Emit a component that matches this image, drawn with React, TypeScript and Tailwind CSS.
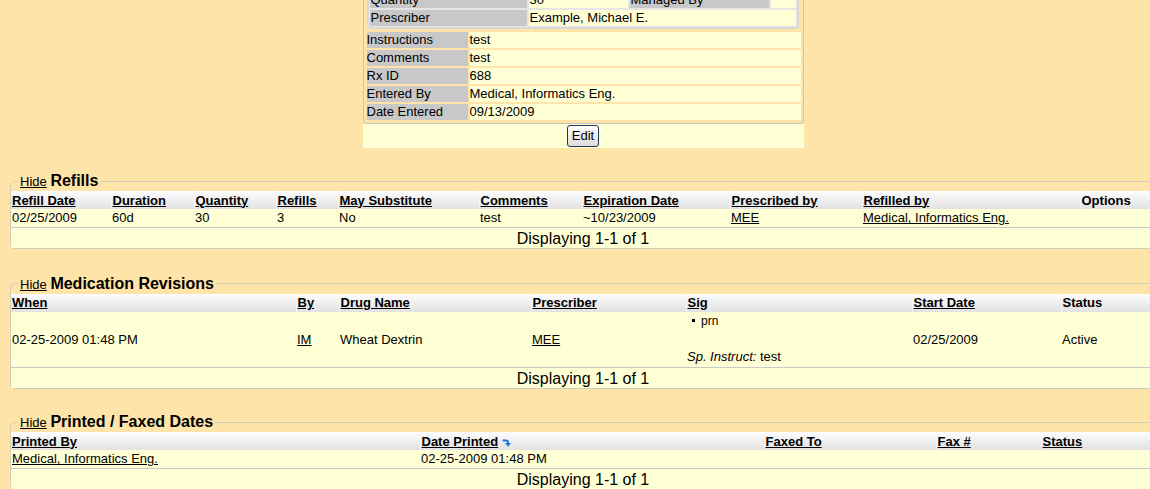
import React from "react";

const Y = "bg-[#ffffd6]";
const G = "bg-[#c8c8c8]";

function InfoRow({ label, value }: { label: string; value: string }) {
  return (
    <div className="grid grid-cols-[101px_1fr] gap-[2px] h-[16px] leading-[16px]">
      <div className={G}>{label}</div>
      <div className={Y}>{value}</div>
    </div>
  );
}

function TopBox() {
  return (
    <div className="mx-auto w-[441px]">
      <div className="border border-[#c4c4c4] rounded-[4px] pl-[3px] pr-[2px] pt-[2px] pb-[3px]">
        <div className="mr-[2px] border-2 border-[#d9d9d9] rounded-[4px] bg-[#e6e6e6] p-[1px] grid grid-cols-[157px_99px_139px_1fr] gap-[2px] leading-[16px]">
          <div className={`${G} h-[16px] pl-[1px]`}>Quantity</div>
          <div className={`${Y} pl-[1px]`}>30</div>
          <div className={`${G} pl-[1px]`}>Managed By</div>
          <div className={Y}></div>
          <div className={`${G} h-[16px] pl-[1px]`}>Prescriber</div>
          <div className={`${Y} col-span-3 pl-[1px]`}>Example, Michael E.</div>
        </div>
        <div className="mt-[3px] flex flex-col gap-[2px]">
          <InfoRow label="Instructions" value="test" />
          <InfoRow label="Comments" value="test" />
          <InfoRow label="Rx ID" value="688" />
          <InfoRow label="Entered By" value="Medical, Informatics Eng." />
          <InfoRow label="Date Entered" value="09/13/2009" />
        </div>
      </div>
      <div className={`${Y} h-[24px] flex justify-center pt-[1px]`}>
        <button className="h-[22px] w-[32px] border border-[#203a58] rounded-[3px] bg-linear-to-b from-[#ffffff] to-[#dcdcdc] text-[13px] leading-[20px] text-black">
          Edit
        </button>
      </div>
    </div>
  );
}

function Legend({ title }: { title: string }) {
  return (
    <legend className="ml-[7px] px-[2px] leading-[19px] whitespace-nowrap">
      <a className="underline text-[13px]">Hide</a>{" "}
      <span className="text-[16px] font-bold">{title}</span>
    </legend>
  );
}

const TH =
  "h-[18px] p-0 pl-[1px] text-left font-bold align-middle bg-linear-to-b from-[#fdfdfd] to-[#e1e1e1] whitespace-nowrap";
const THB = `${TH} border-l border-[#f6f6f6]`;

function SortIcon() {
  return (
    <svg width="9" height="9" viewBox="0 0 9 9" className="inline-block ml-[4px] -mb-[1px]">
      <path d="M0.5 2.5 H4 Q6 2.5 6 4.5 V5.5" stroke="#2277dd" strokeWidth="2" fill="none" />
      <path d="M3 5 H9 L6 8.8 Z" fill="#2277dd" />
    </svg>
  );
}

function Footer({ span }: { span: number }) {
  return (
    <tr className={Y}>
      <td colSpan={span} className="h-[20px] p-0 pt-[1px] text-center text-[16px] leading-[19px]">
        Displaying 1-1 of 1
      </td>
    </tr>
  );
}

function Refills() {
  return (
    <fieldset className="mx-[10px] mt-[23px] border border-[#d2cdbd] rounded-[5px]">
      <Legend title="Refills" />
      <table className="w-full table-fixed border-collapse">
        <colgroup>
          <col className="w-[100px]" />
          <col className="w-[83px]" />
          <col className="w-[82px]" />
          <col className="w-[62px]" />
          <col className="w-[141px]" />
          <col className="w-[103px]" />
          <col className="w-[148px]" />
          <col className="w-[132px]" />
          <col className="w-[218px]" />
          <col className="w-[75px]" />
        </colgroup>
        <thead>
          <tr>
            <th className={TH}><a className="underline">Refill Date</a></th>
            <th className={THB}><a className="underline">Duration</a></th>
            <th className={THB}><a className="underline">Quantity</a></th>
            <th className={THB}><a className="underline">Refills</a></th>
            <th className={THB}><a className="underline">May Substitute</a></th>
            <th className={THB}><a className="underline">Comments</a></th>
            <th className={THB}><a className="underline">Expiration Date</a></th>
            <th className={THB}><a className="underline">Prescribed by</a></th>
            <th className={THB}><a className="underline">Refilled by</a></th>
            <th className={THB}>Options</th>
          </tr>
        </thead>
        <tbody>
          <tr className={`${Y} border-b border-[#c8c8c8]`}>
            <td className="h-[18px] p-0 pl-[1px]">02/25/2009</td>
            <td className="p-0 pl-[1px]">60d</td>
            <td className="p-0 pl-[1px]">30</td>
            <td className="p-0 pl-[1px]">3</td>
            <td className="p-0 pl-[1px]">No</td>
            <td className="p-0 pl-[1px]">test</td>
            <td className="p-0 pl-[1px]">~10/23/2009</td>
            <td className="p-0 pl-[1px]"><a className="underline">MEE</a></td>
            <td className="p-0 pl-[1px] whitespace-nowrap"><a className="underline">Medical, Informatics Eng.</a></td>
            <td className="p-0 pl-[1px]"></td>
          </tr>
          <Footer span={10} />
        </tbody>
      </table>
    </fieldset>
  );
}

function Revisions() {
  return (
    <fieldset className="mx-[10px] mt-[25px] border border-[#d2cdbd] rounded-[5px]">
      <Legend title="Medication Revisions" />
      <table className="w-full table-fixed border-collapse">
        <colgroup>
          <col className="w-[285px]" />
          <col className="w-[43px]" />
          <col className="w-[192px]" />
          <col className="w-[155px]" />
          <col className="w-[226px]" />
          <col className="w-[149px]" />
          <col className="w-[94px]" />
        </colgroup>
        <thead>
          <tr>
            <th className={TH}><a className="underline">When</a></th>
            <th className={THB}><a className="underline">By</a></th>
            <th className={THB}><a className="underline">Drug Name</a></th>
            <th className={THB}><a className="underline">Prescriber</a></th>
            <th className={THB}><a className="underline">Sig</a></th>
            <th className={THB}><a className="underline">Start Date</a></th>
            <th className={THB}>Status</th>
          </tr>
        </thead>
        <tbody>
          <tr className={`${Y} border-b border-[#c8c8c8]`}>
            <td className="h-[56px] p-0 pl-[1px] align-middle">02-25-2009 01:48 PM</td>
            <td className="p-0 pl-[1px] align-middle"><a className="underline">IM</a></td>
            <td className="p-0 pl-[1px] align-middle">Wheat Dextrin</td>
            <td className="p-0 pl-[1px] align-middle"><a className="underline">MEE</a></td>
            <td className="p-0 pl-[1px] align-top pt-[2px]">
              <ul className="pl-[5px]">
                <li className="flex items-center gap-[6px] text-[12px] leading-[14px]">
                  <span className="inline-block w-[3px] h-[3px] bg-black" />
                  prn
                </li>
              </ul>
              <div className="mt-[21px] leading-[15px]">
                <i>Sp. Instruct:</i> test
              </div>
            </td>
            <td className="p-0 pl-[1px] align-middle">02/25/2009</td>
            <td className="p-0 pl-[1px] align-middle">Active</td>
          </tr>
          <Footer span={7} />
        </tbody>
      </table>
    </fieldset>
  );
}

function Printed() {
  return (
    <fieldset className="mx-[10px] mt-[23px] border border-[#d2cdbd] rounded-[5px]">
      <Legend title="Printed / Faxed Dates" />
      <table className="w-full table-fixed border-collapse">
        <colgroup>
          <col className="w-[409px]" />
          <col className="w-[344px]" />
          <col className="w-[172px]" />
          <col className="w-[105px]" />
          <col className="w-[114px]" />
        </colgroup>
        <thead>
          <tr>
            <th className={TH}><a className="underline">Printed By</a></th>
            <th className={THB}>
              <a className="underline">Date Printed</a>
              <SortIcon />
            </th>
            <th className={THB}><a className="underline">Faxed To</a></th>
            <th className={THB}><a className="underline">Fax #</a></th>
            <th className={THB}><a className="underline">Status</a></th>
          </tr>
        </thead>
        <tbody>
          <tr className={`${Y} border-b border-[#c8c8c8]`}>
            <td className="h-[18px] p-0 pl-[1px] whitespace-nowrap"><a className="underline">Medical, Informatics Eng.</a></td>
            <td className="p-0 pl-[1px]">02-25-2009 01:48 PM</td>
            <td className="p-0 pl-[1px]"></td>
            <td className="p-0 pl-[1px]"></td>
            <td className="p-0 pl-[1px]"></td>
          </tr>
          <Footer span={5} />
        </tbody>
      </table>
    </fieldset>
  );
}

export default function App() {
  return (
    <div className="w-[1150px] h-[489px] overflow-hidden bg-[#fee4a8] text-[13px] leading-[15px] text-black font-['Liberation_Sans',Arial,sans-serif]">
      <div className="w-[1166px] -mt-[14px]">
        <TopBox />
        <Refills />
        <Revisions />
        <Printed />
      </div>
    </div>
  );
}
